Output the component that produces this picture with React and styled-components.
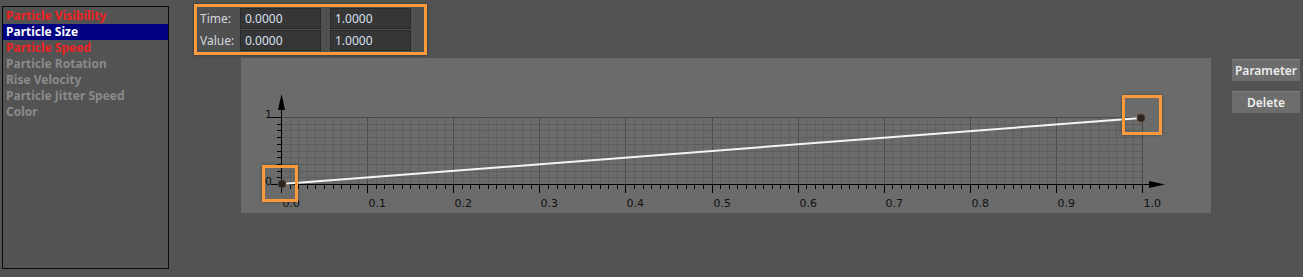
import React from 'react';
import styled, { createGlobalStyle } from 'styled-components';

const GlobalStyle = createGlobalStyle`
  html, body {
    margin: 0;
    padding: 0;
    background: #535353;
  }
  body {
    font-family: "DejaVu Sans", "Liberation Sans", sans-serif;
    overflow: hidden;
  }
`;

const Page = styled.div`
  display: flex;
  align-items: flex-start;
  width: 1303px;
  height: 277px;
  padding: 4px 0 0 2px;
  box-sizing: border-box;
`;

const ChannelList = styled.ul`
  list-style: none;
  margin: 2px 0 0 0;
  padding: 1px 0 0 0;
  width: 167px;
  height: 263px;
  box-sizing: border-box;
  border: 1px solid #0a0a0a;
`;

const ChannelItem = styled.li`
  height: 16px;
  line-height: 16px;
  padding-left: 3px;
  font-family: "Noto Sans", sans-serif;
  font-weight: 700;
  font-size: 12px;
  color: ${(p) => (p.$selected ? '#ffffff' : p.$active ? '#ee2222' : '#8a8a8a')};
  background: ${(p) => (p.$selected ? '#000080' : 'transparent')};
  white-space: nowrap;
`;

const Center = styled.div`
  display: flex;
  flex-direction: column;
  margin-left: 25px;
`;

const KeyToolbar = styled.div`
  display: grid;
  grid-template-columns: 31px 81px 81px;
  grid-auto-rows: 21px;
  column-gap: 9px;
  row-gap: 1px;
  width: 233px;
  height: 51px;
  box-sizing: border-box;
  padding: 0 0 0 3px;
  align-content: center;
  border: 3px solid #fb9a3c;
  box-shadow: 0 0 3px rgba(0, 0, 0, 0.45);
  background: #505050;
`;

const FieldLabel = styled.span`
  display: flex;
  align-items: flex-end;
  padding-bottom: 2px;
  white-space: nowrap;
  font-family: "Noto Sans", sans-serif;
  font-size: 12px;
  color: #d4d8de;
`;

const NumberField = styled.div`
  display: flex;
  align-items: center;
  padding-left: 4px;
  box-sizing: border-box;
  background: #363636;
  border: 1px solid #2a2a2a;
  font-family: "Noto Sans", sans-serif;
  font-size: 12px;
  color: #d8e0f0;
`;

const ChartFrame = styled.div`
  position: relative;
  margin: 3px 0 0 47px;
  width: 970px;
  height: 155px;
  background: #6b6b6b;
`;

const Highlight = styled.div`
  position: absolute;
  left: ${(p) => p.$x}px;
  top: ${(p) => p.$y}px;
  width: ${(p) => p.$w}px;
  height: ${(p) => p.$h}px;
  box-sizing: border-box;
  border: 3px solid #fb9a3c;
  box-shadow: 0 0 3px rgba(0, 0, 0, 0.35);
`;

const ButtonColumn = styled.div`
  display: flex;
  flex-direction: column;
  gap: 10px;
  margin: 55px 0 0 21px;
`;

const ToolButton = styled.button`
  width: 68px;
  height: 22px;
  padding: 0;
  border: none;
  border-top: 1px solid #7c7c7c;
  background: #6d6d6d;
  color: #ececec;
  font-family: "Noto Sans", sans-serif;
  font-weight: 600;
  font-size: 12px;
`;

const channels = [
  { name: 'Particle Visibility', active: true },
  { name: 'Particle Size', selected: true },
  { name: 'Particle Speed', active: true },
  { name: 'Particle Rotation' },
  { name: 'Rise Velocity' },
  { name: 'Particle Jitter Speed' },
  { name: 'Color' },
];

const OX = 40;
const OY = 126;
const W = 861;
const H = 67;

const CurveChart = () => {
  const vLines = [];
  for (let i = 0; i <= 100; i++) {
    const x = Math.round(OX + (i * W) / 100) + 0.5;
    vLines.push(
      <line key={'v' + i} x1={x} y1={OY - H} x2={x} y2={OY} stroke={i % 10 === 0 ? '#4a4a4a' : '#5d5d5d'} strokeWidth="1" />
    );
  }
  const hLines = [];
  const yTicks = [];
  for (let j = 0; j <= 10; j++) {
    const y = Math.round(OY - (j * H) / 10) + 0.5;
    hLines.push(<line key={'h' + j} x1={OX} y1={y} x2={OX + W} y2={y} stroke={j === 10 ? '#4a4a4a' : '#5d5d5d'} strokeWidth="1" />);
    const major = j === 0 || j === 10;
    yTicks.push(<line key={'yt' + j} x1={major ? OX - 10 : OX - 4} y1={y} x2={OX} y2={y} stroke="#000" strokeWidth="1" />);
  }
  const xTicks = [];
  const xLabels = [];
  for (let i = 0; i <= 100; i++) {
    const x = Math.round(OX + (i * W) / 100) + 0.5;
    const major = i % 10 === 0;
    xTicks.push(<line key={'xt' + i} x1={x} y1={OY} x2={x} y2={major ? OY + 9 : OY + 5} stroke="#000" strokeWidth="1" />);
    if (major) {
      xLabels.push(
        <text key={'xl' + i} x={x + 1} y={149} fontSize="11" fill="#111" fontFamily='"DejaVu Sans", sans-serif'>
          {(i / 100).toFixed(1)}
        </text>
      );
    }
  }

  return (
    <svg width="970" height="155" style={{ display: 'block' }}>
      {vLines}
      {hLines}
      <line x1={OX + 0.5} y1={52} x2={OX + 0.5} y2={OY + 4} stroke="#000" strokeWidth="1" />
      <polygon points={`${OX + 0.5},36 ${OX - 3},52 ${OX + 4},52`} fill="#000" />
      <line x1={OX} y1={OY + 0.5} x2={908} y2={OY + 0.5} stroke="#000" strokeWidth="1" />
      <polygon points={`924,${OY + 0.5} 908,${OY - 3} 908,${OY + 4}`} fill="#000" />
      {yTicks}
      {xTicks}
      {xLabels}
      <text x={24} y={60} fontSize="11" fill="#111" fontFamily='"DejaVu Sans", sans-serif'>1</text>
      <text x={24} y={127} fontSize="11" fill="#111" fontFamily='"DejaVu Sans", sans-serif'>0</text>
      <line x1={41} y1={126} x2={900} y2={60} stroke="#f4f4f4" strokeWidth="2" />
      <circle cx={41} cy={126} r={4} fill="#2b2420" stroke="#5a4535" strokeWidth="1" />
      <circle cx={900} cy={60} r={4} fill="#2b2420" stroke="#5a4535" strokeWidth="1" />
    </svg>
  );
};

const App = () => {
  return (
    <>
      <GlobalStyle />
      <Page>
        <ChannelList>
          {channels.map((c) => (
            <ChannelItem key={c.name} $active={c.active} $selected={c.selected}>
              {c.name}
            </ChannelItem>
          ))}
        </ChannelList>
        <Center>
          <KeyToolbar>
            <FieldLabel>Time:</FieldLabel>
            <NumberField>0.0000</NumberField>
            <NumberField>1.0000</NumberField>
            <FieldLabel>Value:</FieldLabel>
            <NumberField>0.0000</NumberField>
            <NumberField>1.0000</NumberField>
          </KeyToolbar>
          <ChartFrame>
            <CurveChart />
            <Highlight $x={21} $y={107} $w={36} $h={37} />
            <Highlight $x={881} $y={37} $w={40} $h={40} />
          </ChartFrame>
        </Center>
        <ButtonColumn>
          <ToolButton>Parameter</ToolButton>
          <ToolButton>Delete</ToolButton>
        </ButtonColumn>
      </Page>
    </>
  );
};

export default App;
